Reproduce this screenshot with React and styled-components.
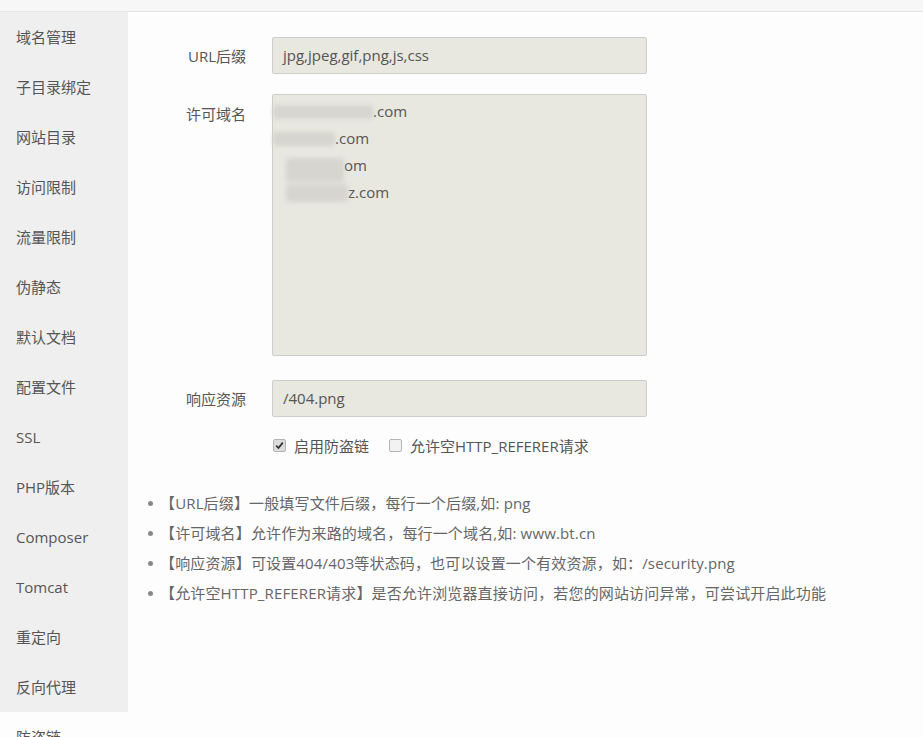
import React from 'react'
import styled, { createGlobalStyle } from 'styled-components'

const GlobalStyle = createGlobalStyle`
  html, body {
    margin: 0;
    padding: 0;
    height: 100%;
    overflow: hidden;
    background: #fdfdfd;
  }
  body {
    font-family: "Open Sans", "Noto Sans CJK SC", sans-serif;
    font-size: 15px;
    color: #555;
  }
`

const TopBar = styled.div`
  height: 11px;
  background: #f7f7f7;
  border-bottom: 1px solid #e6e6e6;
`

const Layout = styled.div`
  display: flex;
  align-items: flex-start;
`

const Sidebar = styled.ul`
  width: 128px;
  margin: 0;
  padding: 0;
  list-style: none;
  background: #efefef;
  flex-shrink: 0;
`

const SideItem = styled.li`
  height: 50px;
  line-height: 50px;
  padding-left: 16px;
  font-size: 15px;
  color: #555;
  background: ${p => (p.active ? '#fdfdfd' : '#efefef')};
`

const Main = styled.div`
  flex: 1;
  padding: 25px 0 0 18px;
`

const Form = styled.div`
  display: flex;
  flex-direction: column;
`

const Row = styled.div`
  display: flex;
  align-items: ${p => (p.top ? 'flex-start' : 'center')};
  margin-bottom: ${p => p.mb}px;
`

const Label = styled.span`
  width: 100px;
  text-align: right;
  padding-right: 26px;
  color: #555;
  font-size: 15px;
  line-height: 20px;
  padding-top: ${p => (p.top ? '10px' : '0')};
`

const Input = styled.div`
  box-sizing: border-box;
  width: 375px;
  height: 37px;
  padding: 0 10px;
  line-height: 35px;
  background: #e8e7e0;
  border: 1px solid #cdcdcd;
  border-radius: 2px;
  color: #555;
  font-size: 15px;
`

const TextArea = styled.div`
  box-sizing: border-box;
  width: 375px;
  height: 262px;
  padding: 3px 10px;
  background: #e8e7e0;
  border: 1px solid #cdcdcd;
  border-radius: 2px;
  color: #555;
  font-size: 15px;
  line-height: 27px;
`

const Line = styled.div`
  display: flex;
  align-items: center;
  height: 27px;
`

const Smudge = styled.span`
  display: inline-block;
  width: ${p => p.w}px;
  height: ${p => p.h || 14}px;
  margin-left: ${p => p.ml || 0}px;
  margin-top: ${p => p.mt || 0}px;
  background: #d6d5d0;
  filter: blur(2px);
  border-radius: 4px;
`

const CheckRow = styled.div`
  display: flex;
  align-items: center;
  margin-left: 127px;
  gap: 20px;
`

const Check = styled.label`
  display: flex;
  align-items: center;
  gap: 8px;
  font-size: 15px;
  color: #555;
`

const Box = styled.span`
  box-sizing: border-box;
  width: 13px;
  height: 13px;
  border: 1px solid #b4b4b4;
  border-radius: 2px;
  background: ${p => (p.checked ? '#dcdcdc' : '#f2f2f2')};
  display: flex;
  align-items: center;
  justify-content: center;
`

const Tips = styled.ul`
  margin: 32px 0 0 0;
  padding: 0;
  list-style: none;
`

const Tip = styled.li`
  position: relative;
  padding-left: 14px;
  height: 30px;
  line-height: 30px;
  color: #666;
  font-size: 15px;
  letter-spacing: 0.15px;
  &::before {
    content: '';
    position: absolute;
    left: 2px;
    top: 13px;
    width: 5px;
    height: 5px;
    border-radius: 50%;
    background: #888;
  }
`

const menu = ['域名管理', '子目录绑定', '网站目录', '访问限制', '流量限制', '伪静态', '默认文档', '配置文件', 'SSL', 'PHP版本', 'Composer', 'Tomcat', '重定向', '反向代理', '防盗链']

const tips = [
  '【URL后缀】一般填写文件后缀，每行一个后缀,如: png',
  '【许可域名】允许作为来路的域名，每行一个域名,如: www.bt.cn',
  '【响应资源】可设置404/403等状态码，也可以设置一个有效资源，如：/security.png',
  '【允许空HTTP_REFERER请求】是否允许浏览器直接访问，若您的网站访问异常，可尝试开启此功能',
]

const CheckMark = () => (
  <svg width="9" height="9" viewBox="0 0 9 9">
    <path d="M1.2 4.6 L3.5 7 L7.8 1.6" fill="none" stroke="#333" strokeWidth="1.8" />
  </svg>
)

const App = () => (
  <>
    <GlobalStyle />
    <TopBar />
    <Layout>
      <Sidebar>
        {menu.map((m, i) => (
          <SideItem key={m} active={i === menu.length - 1}>{m}</SideItem>
        ))}
      </Sidebar>
      <Main>
        <Form>
          <Row mb={20}>
            <Label>URL后缀</Label>
            <Input>jpg,jpeg,gif,png,js,css</Input>
          </Row>
          <Row top mb={24}>
            <Label top>许可域名</Label>
            <TextArea>
              <Line><Smudge w={100} ml={-10} />.com</Line>
              <Line><Smudge w={62} ml={-10} />.com</Line>
              <Line><Smudge w={58} h={24} ml={3} mt={8} />om</Line>
              <Line><Smudge w={62} h={18} ml={3} />z.com</Line>
            </TextArea>
          </Row>
          <Row mb={18}>
            <Label>响应资源</Label>
            <Input>/404.png</Input>
          </Row>
          <CheckRow>
            <Check><Box checked><CheckMark /></Box>启用防盗链</Check>
            <Check><Box />允许空HTTP_REFERER请求</Check>
          </CheckRow>
        </Form>
        <Tips>
          {tips.map(t => <Tip key={t}>{t}</Tip>)}
        </Tips>
      </Main>
    </Layout>
  </>
)

export default App
